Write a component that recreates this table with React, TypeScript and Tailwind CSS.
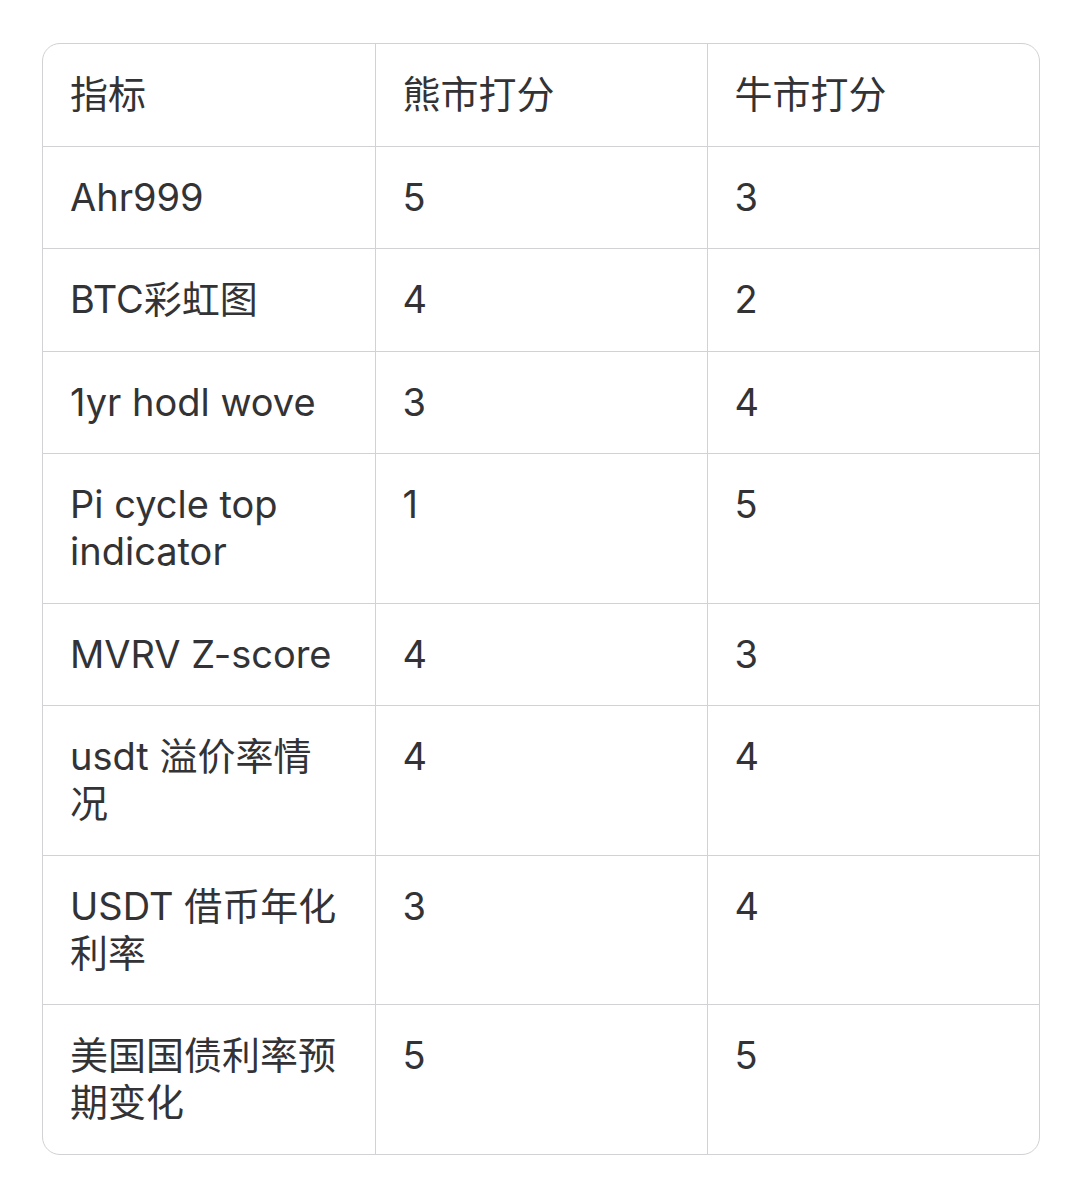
const rows: { name: React.ReactNode; bear: string; bull: string }[] = [
  { name: 'Ahr999', bear: '5', bull: '3' },
  { name: 'BTC彩虹图', bear: '4', bull: '2' },
  { name: '1yr hodl wove', bear: '3', bull: '4' },
  { name: <>Pi cycle top<br />indicator</>, bear: '1', bull: '5' },
  { name: 'MVRV Z-score', bear: '4', bull: '3' },
  { name: <>usdt 溢价率情<br />况</>, bear: '4', bull: '4' },
  { name: <>USDT 借币年化<br />利率</>, bear: '3', bull: '4' },
  { name: <>美国国债利率预<br />期变化</>, bear: '5', bull: '5' },
]

const cell = 'px-[27px] py-[27.25px] align-top text-left font-normal'

export default function App() {
  return (
    <div
      className="min-h-[1200px] bg-white px-[42px] pt-[43px] text-[38px] leading-[47px] text-[#333336]"
      style={{ fontFamily: 'Inter, "Noto Sans CJK SC", sans-serif' }}
    >
      <div className="overflow-hidden rounded-[18px] border border-[#d1d1d6]">
        <table className="w-full table-fixed border-collapse">
          <thead>
            <tr>
              <th className={cell}>指标</th>
              <th className={`${cell} border-l border-[#d1d1d6]`}>熊市打分</th>
              <th className={`${cell} border-l border-[#d1d1d6]`}>牛市打分</th>
            </tr>
          </thead>
          <tbody>
            {rows.map((r, i) => (
              <tr key={i} className="border-t border-[#d1d1d6]">
                <td className={cell}>{r.name}</td>
                <td className={`${cell} border-l border-[#d1d1d6]`}>{r.bear}</td>
                <td className={`${cell} border-l border-[#d1d1d6]`}>{r.bull}</td>
              </tr>
            ))}
          </tbody>
        </table>
      </div>
    </div>
  )
}
